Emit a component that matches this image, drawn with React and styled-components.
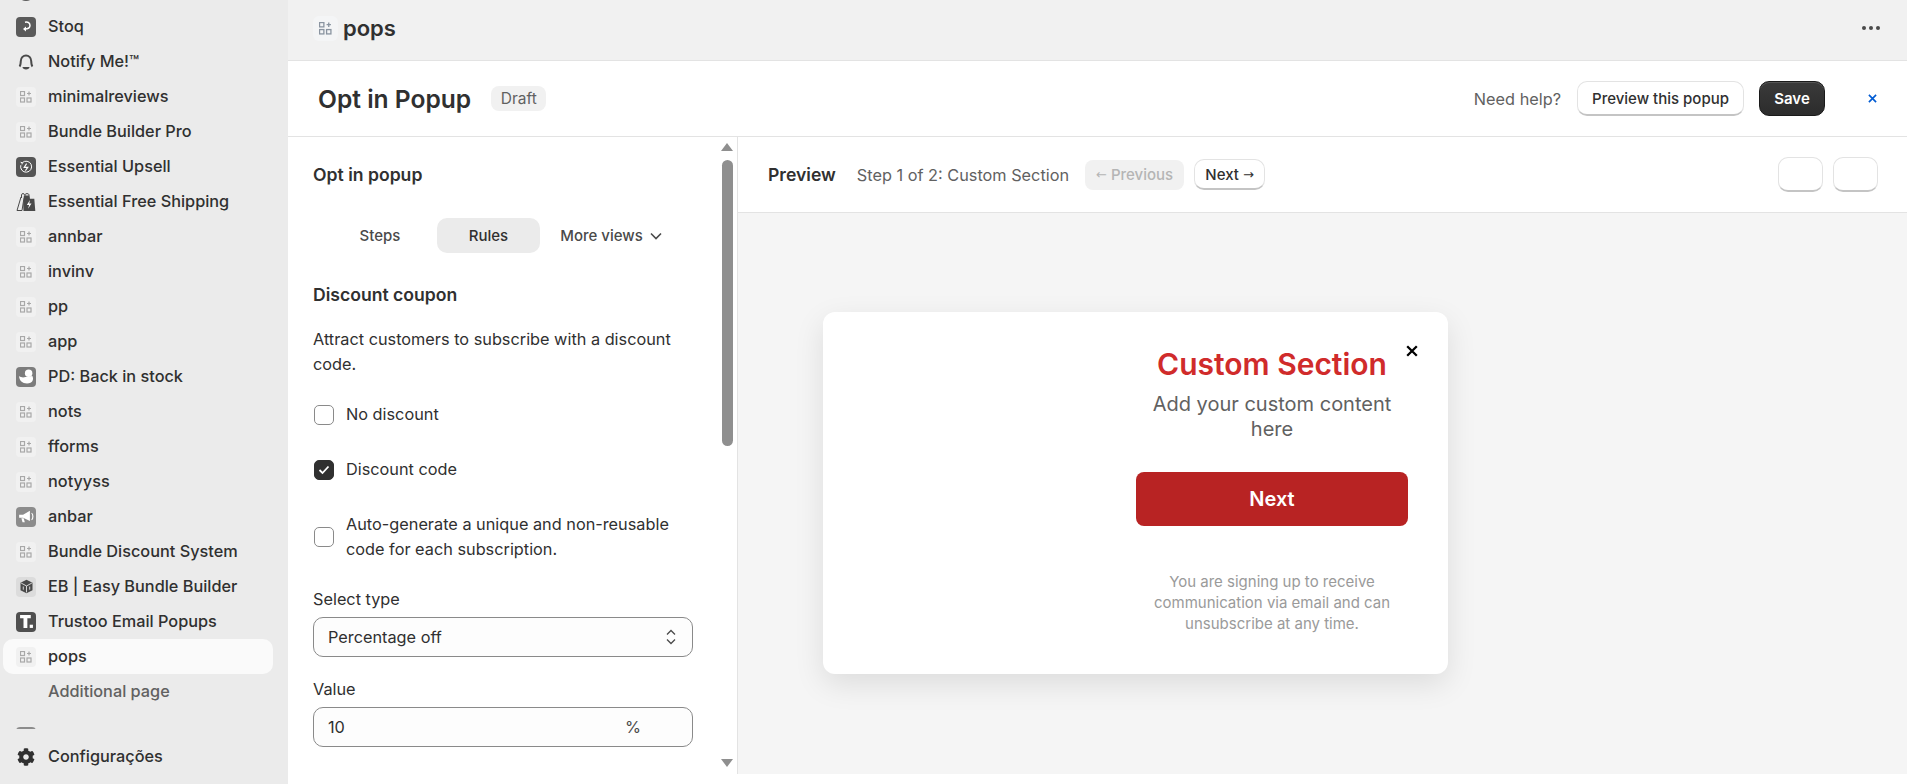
import styled, { createGlobalStyle } from "styled-components";
import { FaCog } from "react-icons/fa";

const Global = createGlobalStyle`
  html, body { margin: 0; padding: 0; background: #fff; }
  body { font-family: Inter, "Noto Sans", sans-serif; color: #303030; overflow: hidden; }
  * { box-sizing: border-box; }
`;

const Page = styled.div`
  display: flex;
  width: 1907px;
  height: 784px;
  overflow: hidden;
`;

const Sidebar = styled.aside`
  display: flex;
  flex-direction: column;
  width: 288px;
  flex: none;
  background: #ebebeb;
`;

const NavList = styled.div`
  height: 729px;
  overflow: hidden;
  padding: 0 15px 0 3px;
  flex: none;
`;

const NavScroll = styled.div`
  margin-top: -26px;
`;

const NavRow = styled.div`
  display: flex;
  align-items: center;
  gap: 12px;
  height: 35px;
  padding-left: 13px;
  border-radius: 10px;
  font-size: 16.3px;
  font-weight: 500;
  color: ${(p) => (p.$muted ? "#616161" : "#303030")};
  background: ${(p) => (p.$active ? "#fafafa" : "transparent")};
`;

const NavLabel = styled.span`
  margin-bottom: 2px;
`;

const NavSection = styled(NavRow)`
  margin-top: 10px;
`;

const NavSpacer = styled.span`
  width: 20px;
  height: 20px;
  flex: none;
`;

const SettingsRow = styled(NavRow)`
  margin: 10px 15px 0 3px;
`;

const AppTile = styled.span`
  display: flex;
  align-items: center;
  justify-content: center;
  width: ${(p) => (p.$large ? "25px" : "20px")};
  height: ${(p) => (p.$large ? "25px" : "20px")};
  flex: none;
  border-radius: ${(p) => (p.$large ? "6px" : "4px")};
  background: ${(p) => p.$bg || "#f1f1f1"};
`;

const Main = styled.main`
  display: flex;
  flex-direction: column;
  flex: 1;
  min-width: 0;
`;

const TopBar = styled.header`
  display: flex;
  align-items: center;
  height: 61px;
  padding: 0 27px 4px 25px;
  gap: 5px;
  background: #f1f1f1;
  border-bottom: 1px solid #e3e3e3;
  flex: none;
`;

const TopTitle = styled.h1`
  margin: 0;
  flex: 1;
  font-size: 22px;
  font-weight: 600;
  color: #303030;
`;

const Dots = styled.div`
  display: flex;
  gap: 3px;
`;

const Dot = styled.i`
  width: 4px;
  height: 4px;
  border-radius: 50%;
  background: #4a4a4a;
`;

const TitleBar = styled.div`
  display: flex;
  align-items: center;
  height: 76px;
  padding: 0 30px;
  background: #fff;
  border-bottom: 1px solid #e3e3e3;
  flex: none;
`;

const PageTitle = styled.h2`
  margin: 0 20px 0 0;
  font-size: 24.6px;
  font-weight: 600;
  color: #303030;
`;

const Badge = styled.span`
  display: flex;
  align-items: center;
  height: 25px;
  padding: 0 9.5px;
  border-radius: 8px;
  background: #f1f1f1;
  font-size: 15.5px;
  color: #616161;
`;

const TitleActions = styled.div`
  display: flex;
  align-items: center;
  margin-left: auto;
`;

const HelpText = styled.span`
  font-size: 16.3px;
  color: #616161;
  margin-right: 16px;
`;

const WhiteButton = styled.button`
  display: flex;
  align-items: center;
  justify-content: center;
  height: ${(p) => p.$h || "35px"};
  width: ${(p) => p.$w || "auto"};
  padding: 0;
  border: 1px solid #e3e3e3;
  border-bottom-color: #c4c4c4;
  border-bottom-width: 2px;
  border-radius: 10px;
  background: #fff;
  font-family: inherit;
  font-size: 15px;
  font-weight: 500;
  color: #303030;
`;

const SaveButton = styled.button`
  display: flex;
  align-items: center;
  justify-content: center;
  width: 66px;
  height: 35px;
  margin-left: 15px;
  border: 1px solid #1a1a1a;
  border-radius: 10px;
  background: linear-gradient(#3a3a3a, #2c2c2c);
  box-shadow: inset 0 1px 0 #555;
  font-family: inherit;
  font-size: 15px;
  font-weight: 600;
  color: #fff;
`;

const CloseLink = styled.span`
  display: flex;
  margin-left: 43px;
  color: #005bd3;
`;

const Body = styled.div`
  display: flex;
  flex: none;
  height: 637px;
`;

const Settings = styled.section`
  position: relative;
  width: 450px;
  flex: none;
  padding: 26px 0 0 25px;
  background: #fff;
  border-right: 1px solid #e3e3e3;
  overflow: hidden;
`;

const ScrollTrack = styled.div`
  position: absolute;
  top: 0;
  right: 1px;
  width: 17px;
  height: 100%;
`;

const ScrollThumb = styled.div`
  position: absolute;
  top: 23px;
  left: 3px;
  width: 11px;
  height: 286px;
  border-radius: 6px;
  background: #8f8f8f;
`;

const ScrollArrow = styled.div`
  position: absolute;
  left: 2px;
  ${(p) => (p.$down ? "bottom: 7px;" : "top: 6px;")}
  width: 0;
  height: 0;
  border-left: 6.5px solid transparent;
  border-right: 6.5px solid transparent;
  ${(p) => (p.$down ? "border-top: 8px solid #8f8f8f;" : "border-bottom: 8px solid #8f8f8f;")}
`;

const SectionTitle = styled.h3`
  margin: 0;
  font-size: 17.6px;
  line-height: 24px;
  font-weight: 600;
  color: #303030;
`;

const Tabs = styled.div`
  display: flex;
  align-items: center;
  height: 35px;
  margin: 31px 0 30px;
  padding-left: 10px;
  font-size: 15px;
  font-weight: 500;
`;

const Tab = styled.div`
  display: flex;
  align-items: center;
  justify-content: center;
  gap: 7px;
  width: ${(p) => p.$w};
  height: 35px;
  border-radius: 10px;
  color: ${(p) => (p.$active ? "#303030" : "#4a4a4a")};
  background: ${(p) => (p.$active ? "#ebebeb" : "transparent")};
`;

const Paragraph = styled.p`
  width: 382px;
  margin: 20px 0 0;
  font-size: 16.3px;
  line-height: 25px;
  color: #303030;
`;

const CheckRow = styled.label`
  display: flex;
  align-items: center;
  gap: 12px;
  width: 382px;
  margin-top: ${(p) => p.$mt || "30px"};
  font-size: 16.3px;
  line-height: 25px;
  color: #303030;
`;

const CheckBox = styled.span`
  display: flex;
  align-items: center;
  justify-content: center;
  width: 20px;
  height: 20px;
  flex: none;
  margin-left: 1px;
  border-radius: 5px;
  border: 1px solid ${(p) => (p.$on ? "#303030" : "#8a8a8a")};
  background: ${(p) => (p.$on ? "#303030" : "#fff")};
`;

const FieldLabel = styled.div`
  margin-top: ${(p) => p.$mt};
  margin-bottom: 5px;
  font-size: 16.3px;
  line-height: 25px;
  color: #303030;
`;

const Field = styled.div`
  display: flex;
  align-items: center;
  justify-content: space-between;
  width: 380px;
  height: 40px;
  padding: 0 15px 0 14px;
  border: 1px solid #8a8a8a;
  border-radius: 10px;
  background: #fdfdfd;
  font-size: 16.3px;
  color: #303030;
`;

const Suffix = styled.span`
  margin-right: 36px;
  color: #4a4a4a;
`;

const PreviewPane = styled.section`
  display: flex;
  flex-direction: column;
  flex: 1;
  min-width: 0;
`;

const PreviewBar = styled.div`
  display: flex;
  align-items: center;
  height: 76px;
  padding: 0 29px 0 30px;
  background: #fff;
  border-bottom: 1px solid #e3e3e3;
  flex: none;
`;

const PreviewLabel = styled.strong`
  font-size: 17.6px;
  font-weight: 600;
  margin-right: 21px;
  color: #303030;
`;

const StepText = styled.span`
  font-size: 16.3px;
  color: #616161;
  margin-right: 16px;
`;

const PrevButton = styled.div`
  display: flex;
  align-items: center;
  justify-content: center;
  width: 99px;
  height: 30px;
  margin-right: 10px;
  border-radius: 8px;
  background: #f1f1f1;
  font-size: 15px;
  font-weight: 500;
  color: #b5b5b5;
`;

const Arrow = styled.span`
  font-family: "DejaVu Sans", sans-serif;
  font-size: 13px;
  font-weight: 400;
  margin: ${(p) => (p.$left ? "0 4px 0 0" : "0 0 0 4px")};
`;

const SizeButtons = styled.div`
  display: flex;
  gap: 10px;
  margin-left: auto;
`;

const Canvas = styled.div`
  flex: 1;
  display: flex;
  align-items: flex-start;
  padding: 99px 0 0 85px;
  background: #f5f5f5;
`;

const PopupCard = styled.div`
  position: relative;
  display: flex;
  justify-content: flex-end;
  width: 625px;
  height: 362px;
  padding: 34px 40px 0 0;
  border-radius: 12px;
  background: #fff;
  box-shadow: 0 10px 30px rgba(0, 0, 0, 0.1);
`;

const PopupClose = styled.span`
  position: absolute;
  top: 33px;
  right: 30px;
  display: flex;
  color: #000;
`;

const PopupContent = styled.div`
  display: flex;
  flex-direction: column;
  align-items: center;
  width: 272px;
  text-align: center;
`;

const PopupTitle = styled.div`
  font-size: 30px;
  line-height: 36px;
  font-weight: 600;
  color: #d02b2b;
`;

const PopupText = styled.div`
  width: 240px;
  margin-top: 10px;
  font-size: 20px;
  line-height: 25px;
  color: #616161;
`;

const PopupButton = styled.div`
  display: flex;
  align-items: center;
  justify-content: center;
  width: 100%;
  height: 54px;
  margin-top: 30px;
  border-radius: 8px;
  background: #b82323;
  font-size: 20px;
  font-weight: 600;
  color: #fff;
`;

const PopupNote = styled.div`
  width: 240px;
  margin-top: 45px;
  font-size: 15px;
  line-height: 21px;
  color: #9a9a9a;
`;

const GridGlyph = ({ size = 12, color = "#a8a8a8" }) => (
  <svg width={size} height={size} viewBox="0 0 12 12" fill="none" stroke={color} strokeWidth="1.2">
    <rect x="0.5" y="0.5" width="4" height="4" />
    <rect x="0.5" y="7" width="4" height="4" />
    <rect x="7" y="7" width="4" height="4" />
    <path d="M9 0.5v4M7 2.5h4" />
  </svg>
);

const StoqIcon = () => (
  <AppTile $bg="#5a5a5a">
    <svg width="14" height="14" viewBox="0 0 14 14" fill="none" stroke="#fff" strokeWidth="1.5">
      <path d="M6 2.2c3-.8 5 1 5 3.3 0 2.4-2 3.5-5.5 3.5" />
      <path d="M7 6.6L4 9l3 2.4" fill="#fff" stroke="none" />
    </svg>
  </AppTile>
);

const BellIcon = () => (
  <AppTile $bg="transparent">
    <svg width="18" height="18" viewBox="0 0 18 18" fill="none" stroke="#4a4a4a" strokeWidth="2">
      <path d="M2.500 13.500c1-1 1.200-2.500 1.300-5.500C4 4.800 6.300 2.500 9 2.500s5 2.300 5.200 5.500c.1 3 .3 4.500 1.300 5.500" />
      <path d="M5.500 14h7c0 1.500-1.500 2.500-3.500 2.500S5.500 15.500 5.500 14z" fill="#4a4a4a" stroke="none" />
    </svg>
  </AppTile>
);

const UpsellIcon = () => (
  <AppTile $bg="#555">
    <svg width="14" height="14" viewBox="0 0 14 14" fill="none" stroke="#fff" strokeWidth="1">
      <path d="M3.200 2.800a5.500 5.500 0 1 1-1.400 2.400" />
      <path d="M1.600 2.200l1.600.6-.2 1.600" />
      <path d="M7.600 3.600L5.200 7.400h3.600L6.400 10.600" strokeWidth="1.100" />
    </svg>
  </AppTile>
);

const ShippingIcon = () => (
  <AppTile $bg="transparent">
    <svg width="20" height="20" viewBox="0 0 20 20">
      <path d="M8 3.500h5l1 3.200h4.300l1 12.300H7.500L7 9z" fill="#4a4a4a" />
      <path d="M5 5L1 18.500h5L8 6" fill="#ebebeb" stroke="#4a4a4a" strokeWidth="1" />
      <path d="M5.500 6V2.800c0-1.600 3-1.600 3 0M9 6V2.800c0-1.600 4-1.600 4 0V6" fill="none" stroke="#4a4a4a" strokeWidth="1" />
      <path d="M14 8l-3.200 5h2.300l-1 3.800 3.400-5.200h-2.300z" fill="#fff" />
    </svg>
  </AppTile>
);

const DuckIcon = () => (
  <AppTile $bg="#7c7c7c">
    <svg width="17" height="17" viewBox="0 0 16 16" fill="#fff">
      <circle cx="10" cy="5" r="3.500" />
      <path d="M1 7.500c2 1.600 4 1.600 6 1l6.500-1c1.600 3 .4 7-5 7C4 14.500 1.300 12 1 7.500z" />
    </svg>
  </AppTile>
);

const MegaphoneIcon = () => (
  <AppTile $bg="#8c8c8c">
    <svg width="17" height="17" viewBox="0 0 15 15" fill="#fff">
      <path d="M1 6h3.500l6-3.500v9L4.500 8.500H1z" />
      <path d="M3 9h2l1 3.500H4z" />
      <path d="M12 4.500c1.500 1 1.500 5 0 6" fill="none" stroke="#fff" />
    </svg>
  </AppTile>
);

const CubeIcon = () => (
  <AppTile $bg="#dcdcdc">
    <svg width="15" height="15" viewBox="0 0 14 14" fill="#4a4a4a">
      <path d="M7 .7l5.600 2.800v7L7 13.300 1.400 10.500v-7z" />
      <path d="M7 6.500v6M2 3.800l5 2.700 5-2.700M4 7v3M10 7v3" fill="none" stroke="#dcdcdc" strokeWidth="0.900" />
    </svg>
  </AppTile>
);

const TrustooIcon = () => (
  <AppTile $bg="#4f4f4f">
    <svg width="15" height="15" viewBox="0 0 14 14" fill="#fff">
      <path d="M1 1h10v3H7.800v9H4.200V4H1z" />
      <rect x="10" y="10" width="3" height="3" />
    </svg>
  </AppTile>
);

const ClippedTopIcon = () => (
  <AppTile $bg="transparent">
    <svg width="20" height="20" viewBox="0 0 20 20">
      <circle cx="10" cy="10" r="9" fill="#5a5a5a" />
    </svg>
  </AppTile>
);

const Tile = () => (
  <AppTile>
    <GridGlyph />
  </AppTile>
);

const Cross = ({ size = 10, width = 1.600 }) => (
  <svg width={size} height={size} viewBox="0 0 10 10" fill="none" stroke="currentColor" strokeWidth={width}>
    <path d="M1 1l8 8M9 1l-8 8" />
  </svg>
);

const navItems = [
  ["", <ClippedTopIcon key="a" />],
  ["Stoq", <StoqIcon key="b" />],
  ["Notify Me!™", <BellIcon key="c" />],
  ["minimalreviews", <Tile key="d" />],
  ["Bundle Builder Pro", <Tile key="e" />],
  ["Essential Upsell", <UpsellIcon key="f" />],
  ["Essential Free Shipping", <ShippingIcon key="g" />],
  ["annbar", <Tile key="h" />],
  ["invinv", <Tile key="i" />],
  ["pp", <Tile key="j" />],
  ["app", <Tile key="k" />],
  ["PD: Back in stock", <DuckIcon key="l" />],
  ["nots", <Tile key="m" />],
  ["fforms", <Tile key="n" />],
  ["notyyss", <Tile key="o" />],
  ["anbar", <MegaphoneIcon key="p" />],
  ["Bundle Discount System", <Tile key="q" />],
  ["EB | Easy Bundle Builder", <CubeIcon key="r" />],
  ["Trustoo Email Popups", <TrustooIcon key="s" />],
];

export default function App() {
  return (
    <Page>
      <Global />
      <Sidebar>
        <NavList>
          <NavScroll>
            {navItems.map(([label, icon], i) => (
              <NavRow key={i}>
                {icon}
                <NavLabel>{label}</NavLabel>
              </NavRow>
            ))}
            <NavRow $active>
              <Tile />
              <NavLabel>pops</NavLabel>
            </NavRow>
            <NavRow $muted>
              <NavSpacer />
              <NavLabel>Additional page</NavLabel>
            </NavRow>
            <NavSection>
              <AppTile $bg="#8c8c8c" />
            </NavSection>
          </NavScroll>
        </NavList>
        <SettingsRow>
          <AppTile $bg="transparent">
            <FaCog size={18} color="#303030" />
          </AppTile>
          <NavLabel>Configurações</NavLabel>
        </SettingsRow>
      </Sidebar>
      <Main>
        <TopBar>
          <AppTile $large $bg="#f4f5f6">
            <GridGlyph size={13} color="#8a94a0" />
          </AppTile>
          <TopTitle>pops</TopTitle>
          <Dots>
            <Dot />
            <Dot />
            <Dot />
          </Dots>
        </TopBar>
        <TitleBar>
          <PageTitle>Opt in Popup</PageTitle>
          <Badge>Draft</Badge>
          <TitleActions>
            <HelpText>Need help?</HelpText>
            <WhiteButton $w="167px">Preview this popup</WhiteButton>
            <SaveButton>Save</SaveButton>
            <CloseLink>
              <Cross size={9} width={1.800} />
            </CloseLink>
          </TitleActions>
        </TitleBar>
        <Body>
          <Settings>
            <SectionTitle>Opt in popup</SectionTitle>
            <Tabs>
              <Tab $w="114px">Steps</Tab>
              <Tab $w="103px" $active>
                Rules
              </Tab>
              <Tab $w="142px">
                More views
                <svg width="12" height="8" viewBox="0 0 12 8" fill="none" stroke="#4a4a4a" strokeWidth="1.600">
                  <path d="M1 1.500l5 5 5-5" />
                </svg>
              </Tab>
            </Tabs>
            <SectionTitle>Discount coupon</SectionTitle>
            <Paragraph>Attract customers to subscribe with a discount code.</Paragraph>
            <CheckRow $mt="25px">
              <CheckBox />
              No discount
            </CheckRow>
            <CheckRow>
              <CheckBox $on>
                <svg width="12" height="10" viewBox="0 0 12 10" fill="none" stroke="#fff" strokeWidth="1.800">
                  <path d="M1.500 5l3 3 6-6.500" />
                </svg>
              </CheckBox>
              Discount code
            </CheckRow>
            <CheckRow>
              <CheckBox />
              <span>Auto-generate a unique and non-reusable code for each subscription.</span>
            </CheckRow>
            <FieldLabel $mt="25px">Select type</FieldLabel>
            <Field>
              Percentage off
              <svg width="12" height="18" viewBox="0 0 12 18" fill="none" stroke="#4a4a4a" strokeWidth="1.300">
                <path d="M2 6.500L6 2.500l4 4M2 11.500l4 4 4-4" />
              </svg>
            </Field>
            <FieldLabel $mt="20px">Value</FieldLabel>
            <Field>
              10
              <Suffix>%</Suffix>
            </Field>
            <ScrollTrack>
              <ScrollArrow />
              <ScrollThumb />
              <ScrollArrow $down />
            </ScrollTrack>
          </Settings>
          <PreviewPane>
            <PreviewBar>
              <PreviewLabel>Preview</PreviewLabel>
              <StepText>Step 1 of 2: Custom Section</StepText>
              <PrevButton>
                <Arrow $left>←</Arrow>
                Previous
              </PrevButton>
              <WhiteButton $h="31px" $w="71px">
                Next
                <Arrow>→</Arrow>
              </WhiteButton>
              <SizeButtons>
                <WhiteButton $w="45px" />
                <WhiteButton $w="45px" />
              </SizeButtons>
            </PreviewBar>
            <Canvas>
              <PopupCard>
                <PopupClose>
                  <Cross size={12} width={1.900} />
                </PopupClose>
                <PopupContent>
                  <PopupTitle>Custom Section</PopupTitle>
                  <PopupText>Add your custom content here</PopupText>
                  <PopupButton>Next</PopupButton>
                  <PopupNote>You are signing up to receive communication via email and can unsubscribe at any time.</PopupNote>
                </PopupContent>
              </PopupCard>
            </Canvas>
          </PreviewPane>
        </Body>
      </Main>
    </Page>
  );
}
